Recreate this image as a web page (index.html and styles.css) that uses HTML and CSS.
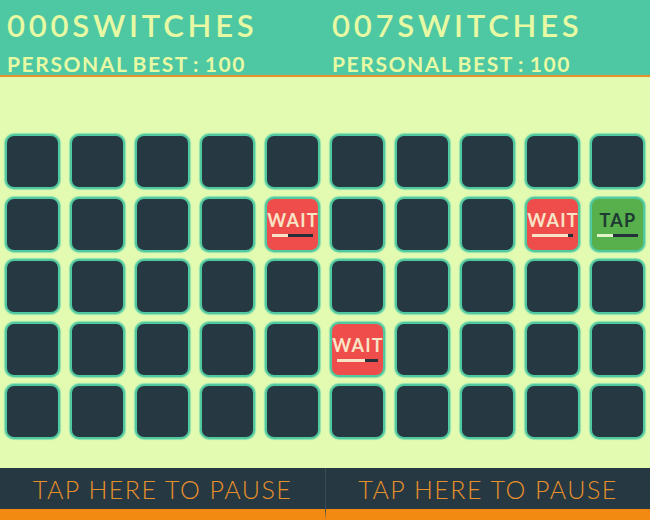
FILE: index.html
```html
<!DOCTYPE html>
<html>
<head>
<meta charset="utf-8">
<link rel="stylesheet" href="styles.css">
</head>
<body>
<div class="screen">
  <section class="panel">
    <header class="top">
      <div class="title">000SWITCHES</div>
      <div class="best">PERSONAL BEST : 100</div>
    </header>
    <main class="board">
      <div class="grid">
        <div class="tile"></div><div class="tile"></div><div class="tile"></div><div class="tile"></div><div class="tile"></div>
        <div class="tile"></div><div class="tile"></div><div class="tile"></div><div class="tile"></div>
        <div class="tile wait"><span class="lbl">WAIT</span><span class="bar"><span class="fill" style="width:38%"></span></span></div>
        <div class="tile"></div><div class="tile"></div><div class="tile"></div><div class="tile"></div><div class="tile"></div>
        <div class="tile"></div><div class="tile"></div><div class="tile"></div><div class="tile"></div><div class="tile"></div>
        <div class="tile"></div><div class="tile"></div><div class="tile"></div><div class="tile"></div><div class="tile"></div>
      </div>
    </main>
    <footer class="foot">TAP HERE TO PAUSE</footer>
  </section>
  <section class="panel second">
    <header class="top">
      <div class="title">007SWITCHES</div>
      <div class="best">PERSONAL BEST : 100</div>
    </header>
    <main class="board">
      <div class="grid">
        <div class="tile"></div><div class="tile"></div><div class="tile"></div><div class="tile"></div><div class="tile"></div>
        <div class="tile"></div><div class="tile"></div><div class="tile"></div>
        <div class="tile wait"><span class="lbl">WAIT</span><span class="bar"><span class="fill" style="width:88%"></span></span></div>
        <div class="tile tap"><span class="lbl">TAP</span><span class="bar"><span class="fill" style="width:38%"></span></span></div>
        <div class="tile"></div><div class="tile"></div><div class="tile"></div><div class="tile"></div><div class="tile"></div>
        <div class="tile wait"><span class="lbl">WAIT</span><span class="bar"><span class="fill" style="width:68%"></span></span></div>
        <div class="tile"></div><div class="tile"></div><div class="tile"></div><div class="tile"></div>
        <div class="tile"></div><div class="tile"></div><div class="tile"></div><div class="tile"></div><div class="tile"></div>
      </div>
    </main>
    <footer class="foot">TAP HERE TO PAUSE</footer>
  </section>
</div>
</body>
</html>
```
FILE: styles.css
```css
html, body {
  margin: 0;
  padding: 0;
  background: #e3fbb1;
}
.screen {
  display: flex;
  width: 650px;
  height: 520px;
  overflow: hidden;
}
.panel {
  width: 325px;
  height: 520px;
  display: flex;
  flex-direction: column;
  background: #e3fbb1;
}
.top {
  height: 75px;
  background: #4dc8a3;
  border-bottom: 2px solid #e8902a;
  color: #e7f9a3;
  font-family: "Lato", "Liberation Sans", sans-serif;
  padding-left: 7px;
  box-sizing: content-box;
}
.title {
  font-size: 31px;
  font-weight: 600;
  line-height: 31px;
  padding-top: 10px;
  letter-spacing: 3.8px;
}
.best {
  font-size: 21px;
  font-weight: 700;
  line-height: 21px;
  padding-top: 12px;
  letter-spacing: 1.6px;
  word-spacing: -2px;
}
.board {
  flex: 1;
  padding: 57px 0 0 5px;
}
.grid {
  display: grid;
  grid-template-columns: repeat(5, 55px);
  grid-auto-rows: 55px;
  column-gap: 10px;
  row-gap: 7.5px;
}
.tile {
  box-sizing: border-box;
  border: 2px solid #4fc99d;
  border-radius: 9px;
  background: #263842;
  box-shadow: 0 0 1px 1px #8fe0b0;
  display: flex;
  flex-direction: column;
  align-items: center;
  justify-content: center;
}
.wait {
  background: #ef4d4b;
}
.tap {
  background: #57b04c;
}
.lbl {
  font-family: "Lato", "Liberation Sans", sans-serif;
  font-weight: 700;
  font-size: 18px;
  line-height: 18px;
  color: #f7e3c6;
  letter-spacing: 1.2px;
  margin-left: 1px;
  margin-top: -1px;
}
.tap .lbl {
  color: #1d3a33;
}
.bar {
  display: block;
  width: 41px;
  height: 3px;
  background: #24303a;
  margin-top: 5px;
}
.fill {
  display: block;
  height: 100%;
  background: #f7e3c6;
}
.tap .fill {
  background: #dff5c8;
}
.foot {
  height: 41px;
  background: #263842;
  border-bottom: 11px solid #f28a12;
  color: #e8902a;
  font-family: "Lato", "Liberation Sans", sans-serif;
  font-weight: 300;
  font-size: 25px;
  line-height: 43px;
  text-align: center;
  letter-spacing: 1.5px;
}
.second .foot {
  border-left: 1px solid #3c4c55;
}
```
